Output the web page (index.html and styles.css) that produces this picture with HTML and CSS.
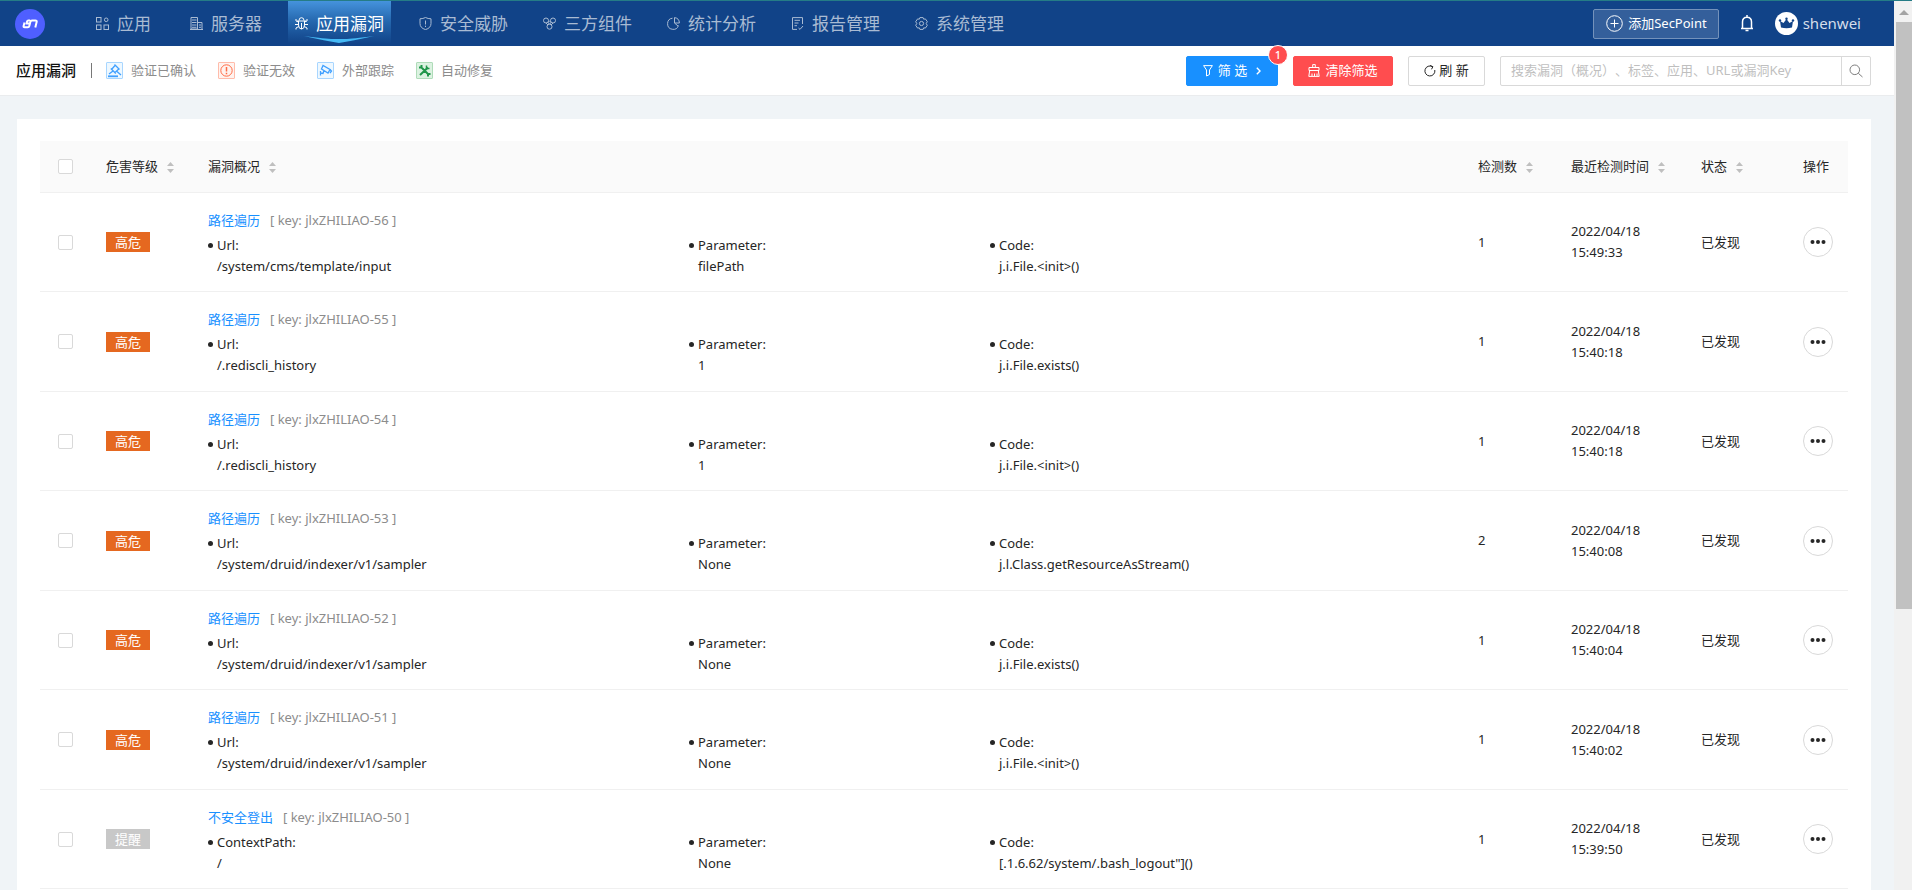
FILE: index.html
```html
<!DOCTYPE html>
<html lang="zh-CN">
<head>
<meta charset="utf-8">
<title>应用漏洞</title>
<link rel="stylesheet" href="styles.css">
</head>
<body>
<svg class="sprite" aria-hidden="true">
  <symbol id="sorter" viewBox="0 0 7 11"><path d="M3.5 0 7 4H0zM3.5 11 7 7H0z" fill="#bfbfbf"/></symbol>
  <symbol id="dots" viewBox="0 0 16 6"><circle cx="2.5" cy="3" r="2"/><circle cx="8" cy="3" r="2"/><circle cx="13.5" cy="3" r="2"/></symbol>
</svg>
<div class="app">
  <div class="page">
    <header class="header">
      <a class="logo" href="#" aria-label="首页">
        <svg width="30" height="30" viewBox="0 0 30 30"><circle cx="15" cy="15" r="15" fill="#4f5fff"/><path d="M9.500 13.500 8.600 17Q8.300 18.300 9.500 18.300H12.800Q14 18.300 14.300 17L15.400 12.800Q15.700 11.500 17 11.500H20.500Q22 11.500 21.700 12.800L20.300 18.500M15.200 11.500H13.300Q12.300 11.500 12 12.500L11.600 14.500H14.500" fill="none" stroke="#fff" stroke-width="2"/></svg>
      </a>
      <nav class="nav">
        <a class="nav-item" href="#"><svg class="nav-icon" viewBox="0 0 13 13"><rect x=".5" y=".5" width="4.500" height="4.500"/><circle cx="10.200" cy="2.800" r="1.800"/><rect x=".5" y="8" width="4.500" height="4.500"/><rect x="8" y="8" width="4.500" height="4.500"/></svg>应用</a>
        <a class="nav-item" href="#"><svg class="nav-icon" viewBox="0 0 13 13"><path d="M1 .5H7.500V12H1zM7.500 5.500H12V12M0 12.500H13M2 3H6.500M2 5.500H6.500M2 8H6.500M2 10.300H6.500M9 8H11M9 10.300H11"/></svg>服务器</a>
        <a class="nav-item active" href="#"><svg class="nav-icon" viewBox="0 0 13 13"><path d="M4 3.500Q4 .7 6.500 .7T9 3.500M2 4H11M3.500 4V8Q3.500 12 6.500 12T9.500 8V4M6.500 6V12M0 7.500H3.500M9.500 7.500H13M1 2V4L3.500 5M12 2V4L9.500 5M1 12.500V11L3.700 9.500M12 12.500V11L9.300 9.500"/></svg>应用漏洞
          <svg class="glow" viewBox="0 0 70 7" preserveAspectRatio="none"><path d="M0 0Q22 3 29 3H41Q48 3 70 0Q48 5 35 7Q22 5 0 0" fill="#45b9f5"/></svg></a>
        <a class="nav-item" href="#"><svg class="nav-icon" viewBox="0 0 13 13"><path d="M6.500 .5Q9 1.800 12 1.800V6.500Q12 11 6.500 12.600Q1 11 1 6.500V1.800Q4 1.800 6.500 .5M6.500 3.500V7.500M6.500 8.700V10"/></svg>安全威胁</a>
        <a class="nav-item" href="#"><svg class="nav-icon" viewBox="0 0 13 13"><circle cx="3" cy="3.500" r="2.500"/><circle cx="10" cy="3.500" r="2.500"/><circle cx="6.500" cy="9.700" r="2.500"/><circle cx="6.500" cy="5.500" r="1.300"/><path d="M3 6 5 8M10 6 8 8"/></svg>三方组件</a>
        <a class="nav-item" href="#"><svg class="nav-icon" viewBox="0 0 13 13"><path d="M5.500 1.200A5.600 5.600 0 1 0 11.500 8.500M7.500 .6A5.600 5.600 0 0 1 12.400 6H7.500zM7.500 6 11 9"/></svg>统计分析</a>
        <a class="nav-item" href="#"><svg class="nav-icon" viewBox="0 0 13 13"><path d="M11.500 7V.6H1.500V12.400H6M3.500 3.300H9M3.500 6H7.500M3.500 8.700H6M7.500 11 9 12.400 12 9"/></svg>报告管理</a>
        <a class="nav-item" href="#"><svg class="nav-icon" viewBox="0 0 13 13"><path d="M4.900 .6H8.100L8.700 2.200 10.400 1.900 12.300 4.700 11.200 6.500 12.300 8.300 10.400 11.100 8.700 10.800 8.100 12.400H4.900L4.300 10.800 2.600 11.100 .7 8.300 1.800 6.500 .7 4.700 2.600 1.900 4.300 2.200z"/><circle cx="6.500" cy="6.500" r="2.100"/></svg>系统管理</a>
      </nav>
      <div class="header-right">
        <button class="add" type="button"><svg width="17" height="17" viewBox="0 0 17 17"><path d="M8.500 4.500V12.500M4.500 8.500H12.500" /><circle cx="8.500" cy="8.500" r="7.800"/></svg>添加SecPoint</button>
        <button class="bell" type="button" aria-label="通知"><svg width="14" height="17" viewBox="0 0 14 17"><path d="M7 0V2M1 13.500H13M2.500 13.500V7Q2.500 2.200 7 2.200T11.500 7V13.500M5.500 15.500H8.500"/></svg></button>
        <a class="user" href="#"><svg width="23" height="23" viewBox="0 0 23 23"><circle cx="11.500" cy="11.500" r="11.500" fill="#fff"/><path d="M6 15.500 5 9 8.500 11 11.500 7 14.500 11 18 9 17 15.500Q11.500 17 6 15.500" fill="#114388"/><circle cx="5" cy="8.500" r="1.200" fill="#114388"/><circle cx="11.500" cy="6.700" r="1.200" fill="#114388"/><circle cx="18" cy="8.500" r="1.200" fill="#114388"/></svg>shenwei</a>
      </div>
    </header>

    <div class="toolbar">
      <h1 class="title">应用漏洞</h1>
      <div class="legend">
        <span class="legend-item"><svg class="mark blue" viewBox="1 1 15 15"><path d="M2 14.300H12" stroke-width="1.800"/><path d="M8.500 2.500 13.500 7.500M9 3.500 5.500 7.500M12.800 7 9 10.500M4.800 6.500 9.800 11.500M7 9 3 12M11 9.500 15 13"/></svg>验证已确认</span>
        <span class="legend-item"><svg class="mark red" viewBox="1 1 15 15"><circle cx="8.500" cy="8.500" r="5.700"/><path d="M8.500 5V9.500M8.500 10.800V12.200" stroke-width="1.500"/></svg>验证无效</span>
        <span class="legend-item"><svg class="mark blue" viewBox="1 1 15 15"><path d="M6 3.500 4.500 7 11 11 13 7.500zM13 7.500 14.500 9 13 11M7 8.500 6 11.500 3.500 11M3.500 9V13.500"/></svg>外部跟踪</span>
        <span class="legend-item"><svg class="mark green" viewBox="1 1 15 15"><path d="M5 5 12.500 12.500M12 5.500 4 13M3 5.500H5.500V3M14.500 12H12V14.500" stroke-width="2"/><path d="M10.500 3.500V6.500H13.500" stroke-width="1.500"/></svg>自动修复</span>
      </div>
      <div class="actions">
        <button class="btn primary" type="button"><svg width="10" height="12" viewBox="0 0 10 12"><path d="M.6 .6H9.400L6.500 5V9.500L3.500 11V5z"/></svg><span>筛 选</span><svg class="chev" width="5" height="8" viewBox="0 0 5 8"><path d="M.8 .8 4 4 .8 7.200"/></svg><span class="badge">1</span></button>
        <button class="btn danger" type="button"><svg width="12" height="13" viewBox="0 0 12 13"><path d="M4.700 3.500V.6H7.300V3.500M1 6.500V3.500H11V6.500zM1.700 6.500.8 12.400H11.200L10.300 6.500M4 12V9.500M6.500 12V9.500M9 12V9.500"/></svg><span>清除筛选</span></button>
        <button class="btn plain" type="button"><svg width="12" height="12" viewBox="0 0 12 12"><path d="M8.500 1.700A5 5 0 1 0 10.800 5M6 .5 8.900 1.700 7.500 4.300"/></svg><span>刷 新</span></button>
        <div class="search">
          <input type="text" aria-label="搜索漏洞" placeholder="搜索漏洞（概况）、标签、应用、URL或漏洞Key">
          <button type="button" aria-label="搜索"><svg width="14" height="14" viewBox="0 0 14 14"><circle cx="5.800" cy="5.800" r="4.800"/><path d="M9.300 9.300 13.500 13"/></svg></button>
        </div>
      </div>
    </div>

    <main class="panel">
      <table class="vulns">
        <colgroup><col class="c-check"><col class="c-level"><col><col class="c-count"><col class="c-time"><col class="c-state"><col class="c-op"></colgroup>
        <thead>
          <tr>
            <th class="check"><input type="checkbox" aria-label="全选"></th>
            <th>危害等级<svg class="sort"><use href="#sorter"/></svg></th>
            <th>漏洞概况<svg class="sort"><use href="#sorter"/></svg></th>
            <th>检测数<svg class="sort"><use href="#sorter"/></svg></th>
            <th>最近检测时间<svg class="sort"><use href="#sorter"/></svg></th>
            <th>状态<svg class="sort"><use href="#sorter"/></svg></th>
            <th>操作</th>
          </tr>
        </thead>
        <tbody>
          <tr>
            <td class="check"><input type="checkbox" aria-label="选择 56"></td>
            <td><span class="tag high">高危</span></td>
            <td class="overview"><div class="name"><a href="#">路径遍历</a><span class="key">[ key: jlxZHILIAO-56 ]</span></div>
              <ul class="facts"><li>Url:<br>/system/cms/template/input</li><li>Parameter:<br>filePath</li><li>Code:<br>j.i.File.&lt;init&gt;()</li></ul></td>
            <td>1</td><td>2022/04/18<br>15:49:33</td><td>已发现</td>
            <td><button class="more" type="button" aria-label="更多"><svg><use href="#dots"/></svg></button></td>
          </tr>
          <tr>
            <td class="check"><input type="checkbox" aria-label="选择 55"></td>
            <td><span class="tag high">高危</span></td>
            <td class="overview"><div class="name"><a href="#">路径遍历</a><span class="key">[ key: jlxZHILIAO-55 ]</span></div>
              <ul class="facts"><li>Url:<br>/.rediscli_history</li><li>Parameter:<br>1</li><li>Code:<br>j.i.File.exists()</li></ul></td>
            <td>1</td><td>2022/04/18<br>15:40:18</td><td>已发现</td>
            <td><button class="more" type="button" aria-label="更多"><svg><use href="#dots"/></svg></button></td>
          </tr>
          <tr>
            <td class="check"><input type="checkbox" aria-label="选择 54"></td>
            <td><span class="tag high">高危</span></td>
            <td class="overview"><div class="name"><a href="#">路径遍历</a><span class="key">[ key: jlxZHILIAO-54 ]</span></div>
              <ul class="facts"><li>Url:<br>/.rediscli_history</li><li>Parameter:<br>1</li><li>Code:<br>j.i.File.&lt;init&gt;()</li></ul></td>
            <td>1</td><td>2022/04/18<br>15:40:18</td><td>已发现</td>
            <td><button class="more" type="button" aria-label="更多"><svg><use href="#dots"/></svg></button></td>
          </tr>
          <tr>
            <td class="check"><input type="checkbox" aria-label="选择 53"></td>
            <td><span class="tag high">高危</span></td>
            <td class="overview"><div class="name"><a href="#">路径遍历</a><span class="key">[ key: jlxZHILIAO-53 ]</span></div>
              <ul class="facts"><li>Url:<br>/system/druid/indexer/v1/sampler</li><li>Parameter:<br>None</li><li>Code:<br>j.l.Class.getResourceAsStream()</li></ul></td>
            <td>2</td><td>2022/04/18<br>15:40:08</td><td>已发现</td>
            <td><button class="more" type="button" aria-label="更多"><svg><use href="#dots"/></svg></button></td>
          </tr>
          <tr>
            <td class="check"><input type="checkbox" aria-label="选择 52"></td>
            <td><span class="tag high">高危</span></td>
            <td class="overview"><div class="name"><a href="#">路径遍历</a><span class="key">[ key: jlxZHILIAO-52 ]</span></div>
              <ul class="facts"><li>Url:<br>/system/druid/indexer/v1/sampler</li><li>Parameter:<br>None</li><li>Code:<br>j.i.File.exists()</li></ul></td>
            <td>1</td><td>2022/04/18<br>15:40:04</td><td>已发现</td>
            <td><button class="more" type="button" aria-label="更多"><svg><use href="#dots"/></svg></button></td>
          </tr>
          <tr>
            <td class="check"><input type="checkbox" aria-label="选择 51"></td>
            <td><span class="tag high">高危</span></td>
            <td class="overview"><div class="name"><a href="#">路径遍历</a><span class="key">[ key: jlxZHILIAO-51 ]</span></div>
              <ul class="facts"><li>Url:<br>/system/druid/indexer/v1/sampler</li><li>Parameter:<br>None</li><li>Code:<br>j.i.File.&lt;init&gt;()</li></ul></td>
            <td>1</td><td>2022/04/18<br>15:40:02</td><td>已发现</td>
            <td><button class="more" type="button" aria-label="更多"><svg><use href="#dots"/></svg></button></td>
          </tr>
          <tr>
            <td class="check"><input type="checkbox" aria-label="选择 50"></td>
            <td><span class="tag note">提醒</span></td>
            <td class="overview"><div class="name"><a href="#">不安全登出</a><span class="key">[ key: jlxZHILIAO-50 ]</span></div>
              <ul class="facts"><li>ContextPath:<br>/</li><li>Parameter:<br>None</li><li>Code:<br>[.1.6.62/system/.bash_logout"]()</li></ul></td>
            <td>1</td><td>2022/04/18<br>15:39:50</td><td>已发现</td>
            <td><button class="more" type="button" aria-label="更多"><svg><use href="#dots"/></svg></button></td>
          </tr>
        </tbody>
      </table>
    </main>
  </div>
  <div class="scrollbar" aria-hidden="true">
    <svg width="10" height="5" viewBox="0 0 10 5"><path d="M5 0 10 5H0z" fill="#a3a3a3"/></svg>
    <div class="thumb"></div>
  </div>
</div>
</body>
</html>
```
FILE: styles.css
```css
* { box-sizing: border-box; }

body {
  margin: 0;
  background: #f0f4f7;
  color: #262626;
  font: 13px/21px "Noto Sans", "Noto Sans CJK SC", sans-serif;
  text-spacing-trim: space-all;
}

a { color: inherit; text-decoration: none; }
button, input { font: inherit; color: inherit; text-spacing-trim: inherit; }
button { cursor: pointer; }
svg { flex: none; fill: none; stroke: currentColor; }
.sprite { display: none; }

.app {
  display: flex;
  height: 100vh;
  overflow: hidden;
  border-top: 1px solid #257c86;
}

.page { flex: 1; min-width: 0; }

/* Header */
.header {
  display: flex;
  align-items: center;
  height: 45px;
  padding: 0 33px 0 15px;
  background: #114388;
}

.logo { display: flex; margin-right: 44px; }
.logo svg { stroke: none; }

.nav { display: flex; align-self: stretch; gap: 21px; }

.nav-item {
  position: relative;
  display: flex;
  align-items: center;
  gap: 8px;
  padding: 0 7px;
  color: #a9bbd3;
  font-size: 17px;
  white-space: nowrap;
}

.nav-item:nth-child(1) { margin-right: 4px; }
.nav-item:nth-child(2) { margin-right: -2px; }

.nav-item.active {
  color: #fff;
  background: linear-gradient(#4593dc, #2567ae 45%, #114388 95%);
}

.nav-icon { width: 13px; height: 13px; }

.glow {
  position: absolute;
  left: 16px;
  bottom: 3px;
  width: 70px;
  height: 7px;
  stroke: none;
}

.header-right { display: flex; align-items: center; margin-left: auto; }

.add {
  display: flex;
  align-items: center;
  gap: 5px;
  height: 30px;
  padding: 0 11px 0 12px;
  border: 1px solid #7492bb;
  border-radius: 2px;
  background: #345f9b;
  color: #fff;
}

.bell {
  display: flex;
  margin: 0 21px;
  padding: 0;
  border: 0;
  background: none;
  color: #fff;
}

.bell svg { stroke-width: 1.5; }

.user {
  display: flex;
  align-items: center;
  gap: 5px;
  color: #d5deea;
  font-size: 15px;
}

.user svg { stroke: none; }

/* Toolbar */
.toolbar {
  display: flex;
  align-items: center;
  height: 50px;
  padding: 0 23px 0 16px;
  border-bottom: 1px solid #eaecee;
  background: #fff;
}

.title {
  margin: 0;
  padding-right: 15px;
  font-size: 15px;
  line-height: 15px;
  font-weight: 500;
  color: #111;
  border-right: 1px solid #777;
}

.legend { display: flex; gap: 22px; padding-left: 14px; }
.legend-item { display: flex; align-items: center; gap: 8px; color: #8c8c8c; }

.mark { width: 17px; height: 17px; border: 1px solid; border-radius: 1px; }
.mark.blue { color: #40a0ff; border-color: #a8d6ff; background: #eef8ff; stroke-width: 1.3; }
.mark.red { color: #ff6b45; border-color: #ffbcab; background: #fff3ef; }
.mark.green { color: #20964a; border-color: #afdcb9; background: #dcf2e1; }

.actions { display: flex; gap: 15px; margin-left: auto; }

.btn {
  position: relative;
  display: flex;
  align-items: center;
  justify-content: center;
  height: 30px;
  padding: 0;
  border: 1px solid;
  border-radius: 2px;
  color: #fff;
}

.btn.primary { width: 92px; gap: 5px; border-color: #1890ff; background: #1890ff; }
.btn.danger { width: 100px; gap: 5px; border-color: #ff4d4f; background: #ff4d4f; }
.btn.plain { width: 77px; gap: 3px; border-color: #d9d9d9; background: #fff; color: #262626; }
.chev { margin-left: 4px; stroke-width: 1.4; }

.badge {
  position: absolute;
  top: -12px;
  right: -11px;
  width: 20px;
  height: 20px;
  border: 1px solid #fff;
  border-radius: 10px;
  background: #ff4d4f;
  font-size: 11px;
  font-weight: 500;
  line-height: 18px;
  text-align: center;
}

.search { display: flex; width: 371px; height: 30px; border: 1px solid #d9d9d9; border-radius: 2px; }

.search input {
  flex: 1;
  min-width: 0;
  padding: 0 10px;
  border: 0;
  outline: 0;
  background: none;
}

.search input::placeholder { color: #bfbfbf; }

.search button {
  display: flex;
  align-items: center;
  justify-content: center;
  width: 29px;
  padding: 0;
  border: 0;
  border-left: 1px solid #d9d9d9;
  background: none;
  color: #7f7f7f;
}

/* Table */
.panel {
  margin: 23px 23px 0 17px;
  padding: 22px 23px;
  background: #fff;
}

.vulns { width: 100%; table-layout: fixed; border-collapse: separate; border-spacing: 0; }
.c-check { width: 50px; }
.c-level { width: 102px; }
.c-count { width: 93px; }
.c-time { width: 130px; }
.c-state { width: 102px; }
.c-op { width: 61px; }

.vulns th,
.vulns td { padding: 0 0 0 16px; text-align: left; border-bottom: 1px solid #f0f0f0; }

.vulns th { height: 52px; background: #fafafa; font-weight: 400; white-space: nowrap; }
.vulns td.overview { padding-top: 17px; padding-bottom: 14px; }
.vulns tr:nth-child(even) td.overview { padding-bottom: 15px; }
.vulns td.check, .vulns th.check { padding-left: 18px; }

.vulns input {
  display: block;
  appearance: none;
  width: 15px;
  height: 15px;
  margin: 0;
  border: 1px solid #d9d9d9;
  border-radius: 2px;
  background: #fff;
}

.sort { width: 7px; height: 11px; margin-left: 9px; stroke: none; vertical-align: -2px; }

.tag { display: block; width: 44px; line-height: 20px; text-align: center; color: #fff; }
.tag.high { background: #e56820; }
.tag.note { background: #c8c8c8; }

.name { display: flex; gap: 10px; margin-bottom: 4px; }
.name a { color: #1890ff; }
.key { color: #8c8c8c; }

.facts {
  display: grid;
  grid-template-columns: 481fr 301fr 472fr;
  margin: 0;
  padding: 0;
  list-style: none;
}

.facts li { position: relative; padding-left: 9px; }

.facts li::before {
  content: "";
  position: absolute;
  left: 0;
  top: 8px;
  width: 5px;
  height: 5px;
  border-radius: 3px;
  background: #262626;
}

.more {
  display: flex;
  align-items: center;
  justify-content: center;
  width: 30px;
  height: 30px;
  padding: 0;
  border: 1px solid #d9d9d9;
  border-radius: 15px;
  background: #fff;
}

.more svg { width: 16px; height: 6px; fill: #262626; stroke: none; }

/* Scrollbar */
.scrollbar {
  display: flex;
  flex-direction: column;
  align-items: flex-end;
  width: 18px;
  background: #f1f1f1;
}

.scrollbar svg { margin: 9px 3px 7px 0; stroke: none; }
.thumb { width: 16px; height: 66%; background: #c1c1c1; }
```
